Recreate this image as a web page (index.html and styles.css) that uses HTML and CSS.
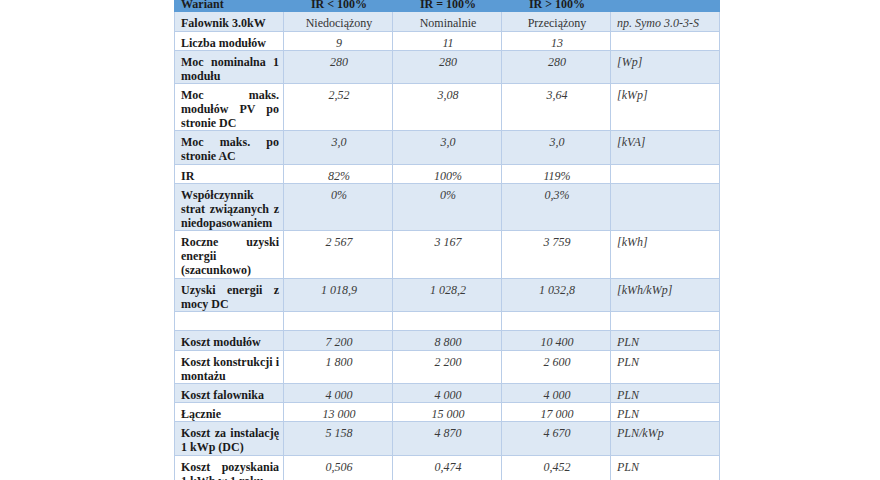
FILE: index.html
```html
<!DOCTYPE html>
<html lang="pl">
<head>
<meta charset="utf-8">
<title>Warianty falownika</title>
<link rel="stylesheet" href="styles.css">
</head>
<body>
<table class="grid">
  <colgroup>
    <col class="c"><col class="c"><col class="c"><col class="c"><col class="c">
  </colgroup>
  <thead>
    <tr class="head">
      <th class="lbl">Wariant</th>
      <th>IR &lt; 100%</th>
      <th>IR = 100%</th>
      <th>IR &gt; 100%</th>
      <th></th>
    </tr>
  </thead>
  <tbody>
    <tr class="band">
      <td class="lbl">Falownik 3.0kW</td>
      <td class="txt">Niedociążony</td>
      <td class="txt">Nominalnie</td>
      <td class="txt">Przeciążony</td>
      <td class="unit">np. Symo 3.0-3-S</td>
    </tr>
    <tr>
      <td class="lbl">Liczba modułów</td>
      <td class="val">9</td>
      <td class="val">11</td>
      <td class="val">13</td>
      <td class="unit"></td>
    </tr>
    <tr class="band">
      <td class="lbl">Moc nominalna 1 modułu</td>
      <td class="val">280</td>
      <td class="val">280</td>
      <td class="val">280</td>
      <td class="unit">[Wp]</td>
    </tr>
    <tr>
      <td class="lbl">Moc maks. modułów PV po stronie DC</td>
      <td class="val">2,52</td>
      <td class="val">3,08</td>
      <td class="val">3,64</td>
      <td class="unit">[kWp]</td>
    </tr>
    <tr class="band">
      <td class="lbl">Moc maks. po stronie AC</td>
      <td class="val">3,0</td>
      <td class="val">3,0</td>
      <td class="val">3,0</td>
      <td class="unit">[kVA]</td>
    </tr>
    <tr>
      <td class="lbl">IR</td>
      <td class="val">82%</td>
      <td class="val">100%</td>
      <td class="val">119%</td>
      <td class="unit"></td>
    </tr>
    <tr class="band">
      <td class="lbl">Współczynnik strat związanych z niedopasowaniem</td>
      <td class="val">0%</td>
      <td class="val">0%</td>
      <td class="val">0,3%</td>
      <td class="unit"></td>
    </tr>
    <tr>
      <td class="lbl">Roczne uzyski energii (szacunkowo)</td>
      <td class="val">2 567</td>
      <td class="val">3 167</td>
      <td class="val">3 759</td>
      <td class="unit">[kWh]</td>
    </tr>
    <tr class="band">
      <td class="lbl">Uzyski energii z mocy DC</td>
      <td class="val">1 018,9</td>
      <td class="val">1 028,2</td>
      <td class="val">1 032,8</td>
      <td class="unit">[kWh/kWp]</td>
    </tr>
    <tr>
      <td class="lbl">&nbsp;</td>
      <td class="val"></td>
      <td class="val"></td>
      <td class="val"></td>
      <td class="unit"></td>
    </tr>
    <tr class="band">
      <td class="lbl">Koszt modułów</td>
      <td class="val">7 200</td>
      <td class="val">8 800</td>
      <td class="val">10 400</td>
      <td class="unit">PLN</td>
    </tr>
    <tr>
      <td class="lbl">Koszt konstrukcji i montażu</td>
      <td class="val">1 800</td>
      <td class="val">2 200</td>
      <td class="val">2 600</td>
      <td class="unit">PLN</td>
    </tr>
    <tr class="band">
      <td class="lbl">Koszt falownika</td>
      <td class="val">4 000</td>
      <td class="val">4 000</td>
      <td class="val">4 000</td>
      <td class="unit">PLN</td>
    </tr>
    <tr>
      <td class="lbl">Łącznie</td>
      <td class="val">13 000</td>
      <td class="val">15 000</td>
      <td class="val">17 000</td>
      <td class="unit">PLN</td>
    </tr>
    <tr class="band">
      <td class="lbl">Koszt za instalację 1&nbsp;kWp (DC)</td>
      <td class="val">5 158</td>
      <td class="val">4 870</td>
      <td class="val">4 670</td>
      <td class="unit">PLN/kWp</td>
    </tr>
    <tr>
      <td class="lbl">Koszt pozyskania 1&nbsp;kWh w&nbsp;1&nbsp;roku</td>
      <td class="val">0,506</td>
      <td class="val">0,474</td>
      <td class="val">0,452</td>
      <td class="unit">PLN</td>
    </tr>
  </tbody>
</table>
</body>
</html>
```

FILE: styles.css
```css
html, body {
  margin: 0;
  padding: 0;
  background: #ffffff;
}

body {
  font-family: "Liberation Serif", "Times New Roman", serif;
  font-size: 12px;
  color: #1a1a1a;
  overflow: hidden;
}

.grid {
  border-collapse: collapse;
  table-layout: fixed;
  width: 546px;
  margin: -8px 0 0 174px;
}

.grid .c {
  width: 109px;
}

.grid th,
.grid td {
  border: 1px solid #b9cde8;
  padding: 4px 4px 0.3px 6px;
  line-height: 14px;
  vertical-align: top;
}

.head th {
  background: #5b9bd5;
  border-color: #5b9bd5;
  font-weight: bold;
  text-align: center;
  color: #1c1c1c;
}

.head th.lbl {
  text-align: left;
}

.band td {
  background: #dde8f4;
}

.lbl {
  font-weight: bold;
  text-align: justify;
  color: #1a1a1a;
}

.txt {
  text-align: center;
  color: #333333;
}

.val {
  text-align: center;
  font-style: italic;
  color: #3a3a3a;
}

.unit {
  text-align: left;
  font-style: italic;
  color: #3a3a3a;
}
```
